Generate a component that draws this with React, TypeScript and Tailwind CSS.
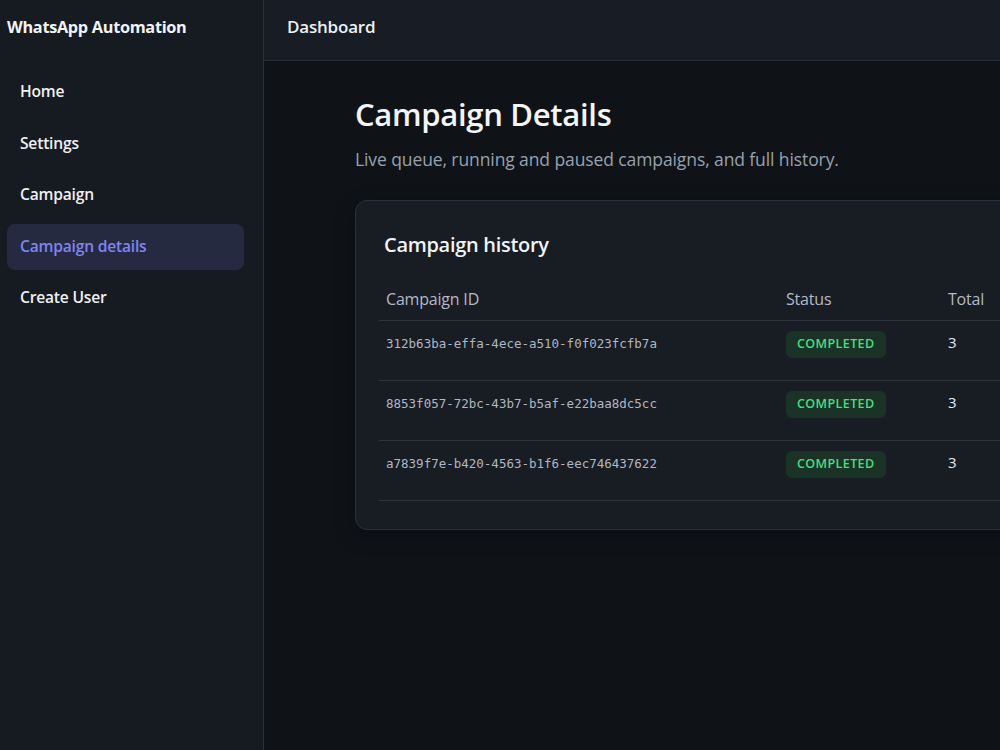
import React from 'react';

const navItems = ['Home', 'Settings', 'Campaign', 'Campaign details', 'Create User'];

const campaigns = [
  { id: '312b63ba-effa-4ece-a510-f0f023fcfb7a', status: 'COMPLETED', total: 3 },
  { id: '8853f057-72bc-43b7-b5af-e22baa8dc5cc', status: 'COMPLETED', total: 3 },
  { id: 'a7839f7e-b420-4563-b1f6-eec746437622', status: 'COMPLETED', total: 3 },
];

export default function App() {
  return (
    <div
      className="flex h-[750px] w-[1000px] overflow-hidden bg-[#0f1318] text-white"
      style={{ fontFamily: '"Open Sans", "Noto Sans", sans-serif' }}
    >
      {/* Sidebar */}
      <aside className="flex w-[264px] shrink-0 flex-col border-r border-[#2a303a] bg-[#161a21]">
        <div className="flex h-[54px] items-center pl-[7px] text-[16.3px] font-bold tracking-[-0.3px] text-[#f1f3f6]">
          WhatsApp Automation
        </div>
        <nav className="flex flex-col gap-[5.5px] pl-[7px] pr-[19px] pt-[15px]">
          {navItems.map((item) => {
            const active = item === 'Campaign details';
            return (
              <div
                key={item}
                className={
                  active
                    ? 'flex h-[46px] items-center rounded-[8px] bg-[#262a40] px-[13px] text-[15.6px] font-semibold tracking-[-0.2px] text-[#8084f2]'
                    : 'flex h-[46px] items-center px-[13px] text-[15.6px] font-semibold tracking-[-0.2px] text-[#eef0f3]'
                }
              >
                {item}
              </div>
            );
          })}
        </nav>
      </aside>

      {/* Main */}
      <div className="flex min-w-0 flex-1 flex-col">
        <header className="flex h-[61px] shrink-0 items-center border-b border-[#2a303a] bg-[#181c24] px-[23px]">
          <span className="-mt-[6px] text-[17px] font-semibold tracking-[-0.2px] text-[#eef0f3]">Dashboard</span>
        </header>

        <main className="flex-1 overflow-hidden pl-[91px] pt-[33px]">
          <h1 className="text-[31px] font-semibold leading-[40px] tracking-[-0.3px] text-[#f3f5f8]">Campaign Details</h1>
          <p className="mt-[12px] text-[17.5px] tracking-[-0.1px] text-[#98a1ae]">
            Live queue, running and paused campaigns, and full history.
          </p>

          <section className="mt-[28px] w-[760px] rounded-[12px] border border-[#2b313b] bg-[#181c23] px-[23px] pb-[28px] pt-[29px] shadow-[0_6px_20px_rgba(0,0,0,0.35)]">
            <h2 className="pl-[5px] text-[20px] font-semibold tracking-[-0.3px] text-[#f1f3f6]">Campaign history</h2>
            <table className="mt-[17px] w-full border-collapse text-left">
              <thead>
                <tr className="border-b border-[#2d343e]">
                  <th className="h-[43px] w-[400px] px-[7px] pt-[1px] text-[16px] font-normal tracking-[-0.2px] text-[#b3bac5]">Campaign ID</th>
                  <th className="h-[43px] w-[162px] px-[7px] pt-[1px] text-[16px] font-normal tracking-[-0.2px] text-[#b3bac5]">Status</th>
                  <th className="h-[43px] px-[7px] pt-[1px] text-[16px] font-normal tracking-[-0.2px] text-[#b3bac5]">Total</th>
                </tr>
              </thead>
              <tbody>
                {campaigns.map((c) => (
                  <tr key={c.id} className="border-b border-[#2d343e]">
                    <td
                      className="h-[60px] px-[7px] pb-[12px] text-[12.5px] text-[#b0b7c2]"
                      style={{ fontFamily: '"DejaVu Sans Mono", "Liberation Mono", monospace' }}
                    >
                      {c.id}
                    </td>
                    <td className="h-[60px] px-[7px] pb-[12px]">
                      <span className="inline-flex h-[27px] items-center rounded-[6px] bg-[#1b3327] px-[11px] text-[12.5px] font-semibold tracking-[0.4px] text-[#4ade80]">
                        {c.status}
                      </span>
                    </td>
                    <td className="h-[60px] px-[7px] pb-[16px] text-[15px] text-[#e6e9ee]">{c.total}</td>
                  </tr>
                ))}
              </tbody>
            </table>
          </section>
        </main>
      </div>
    </div>
  );
}
